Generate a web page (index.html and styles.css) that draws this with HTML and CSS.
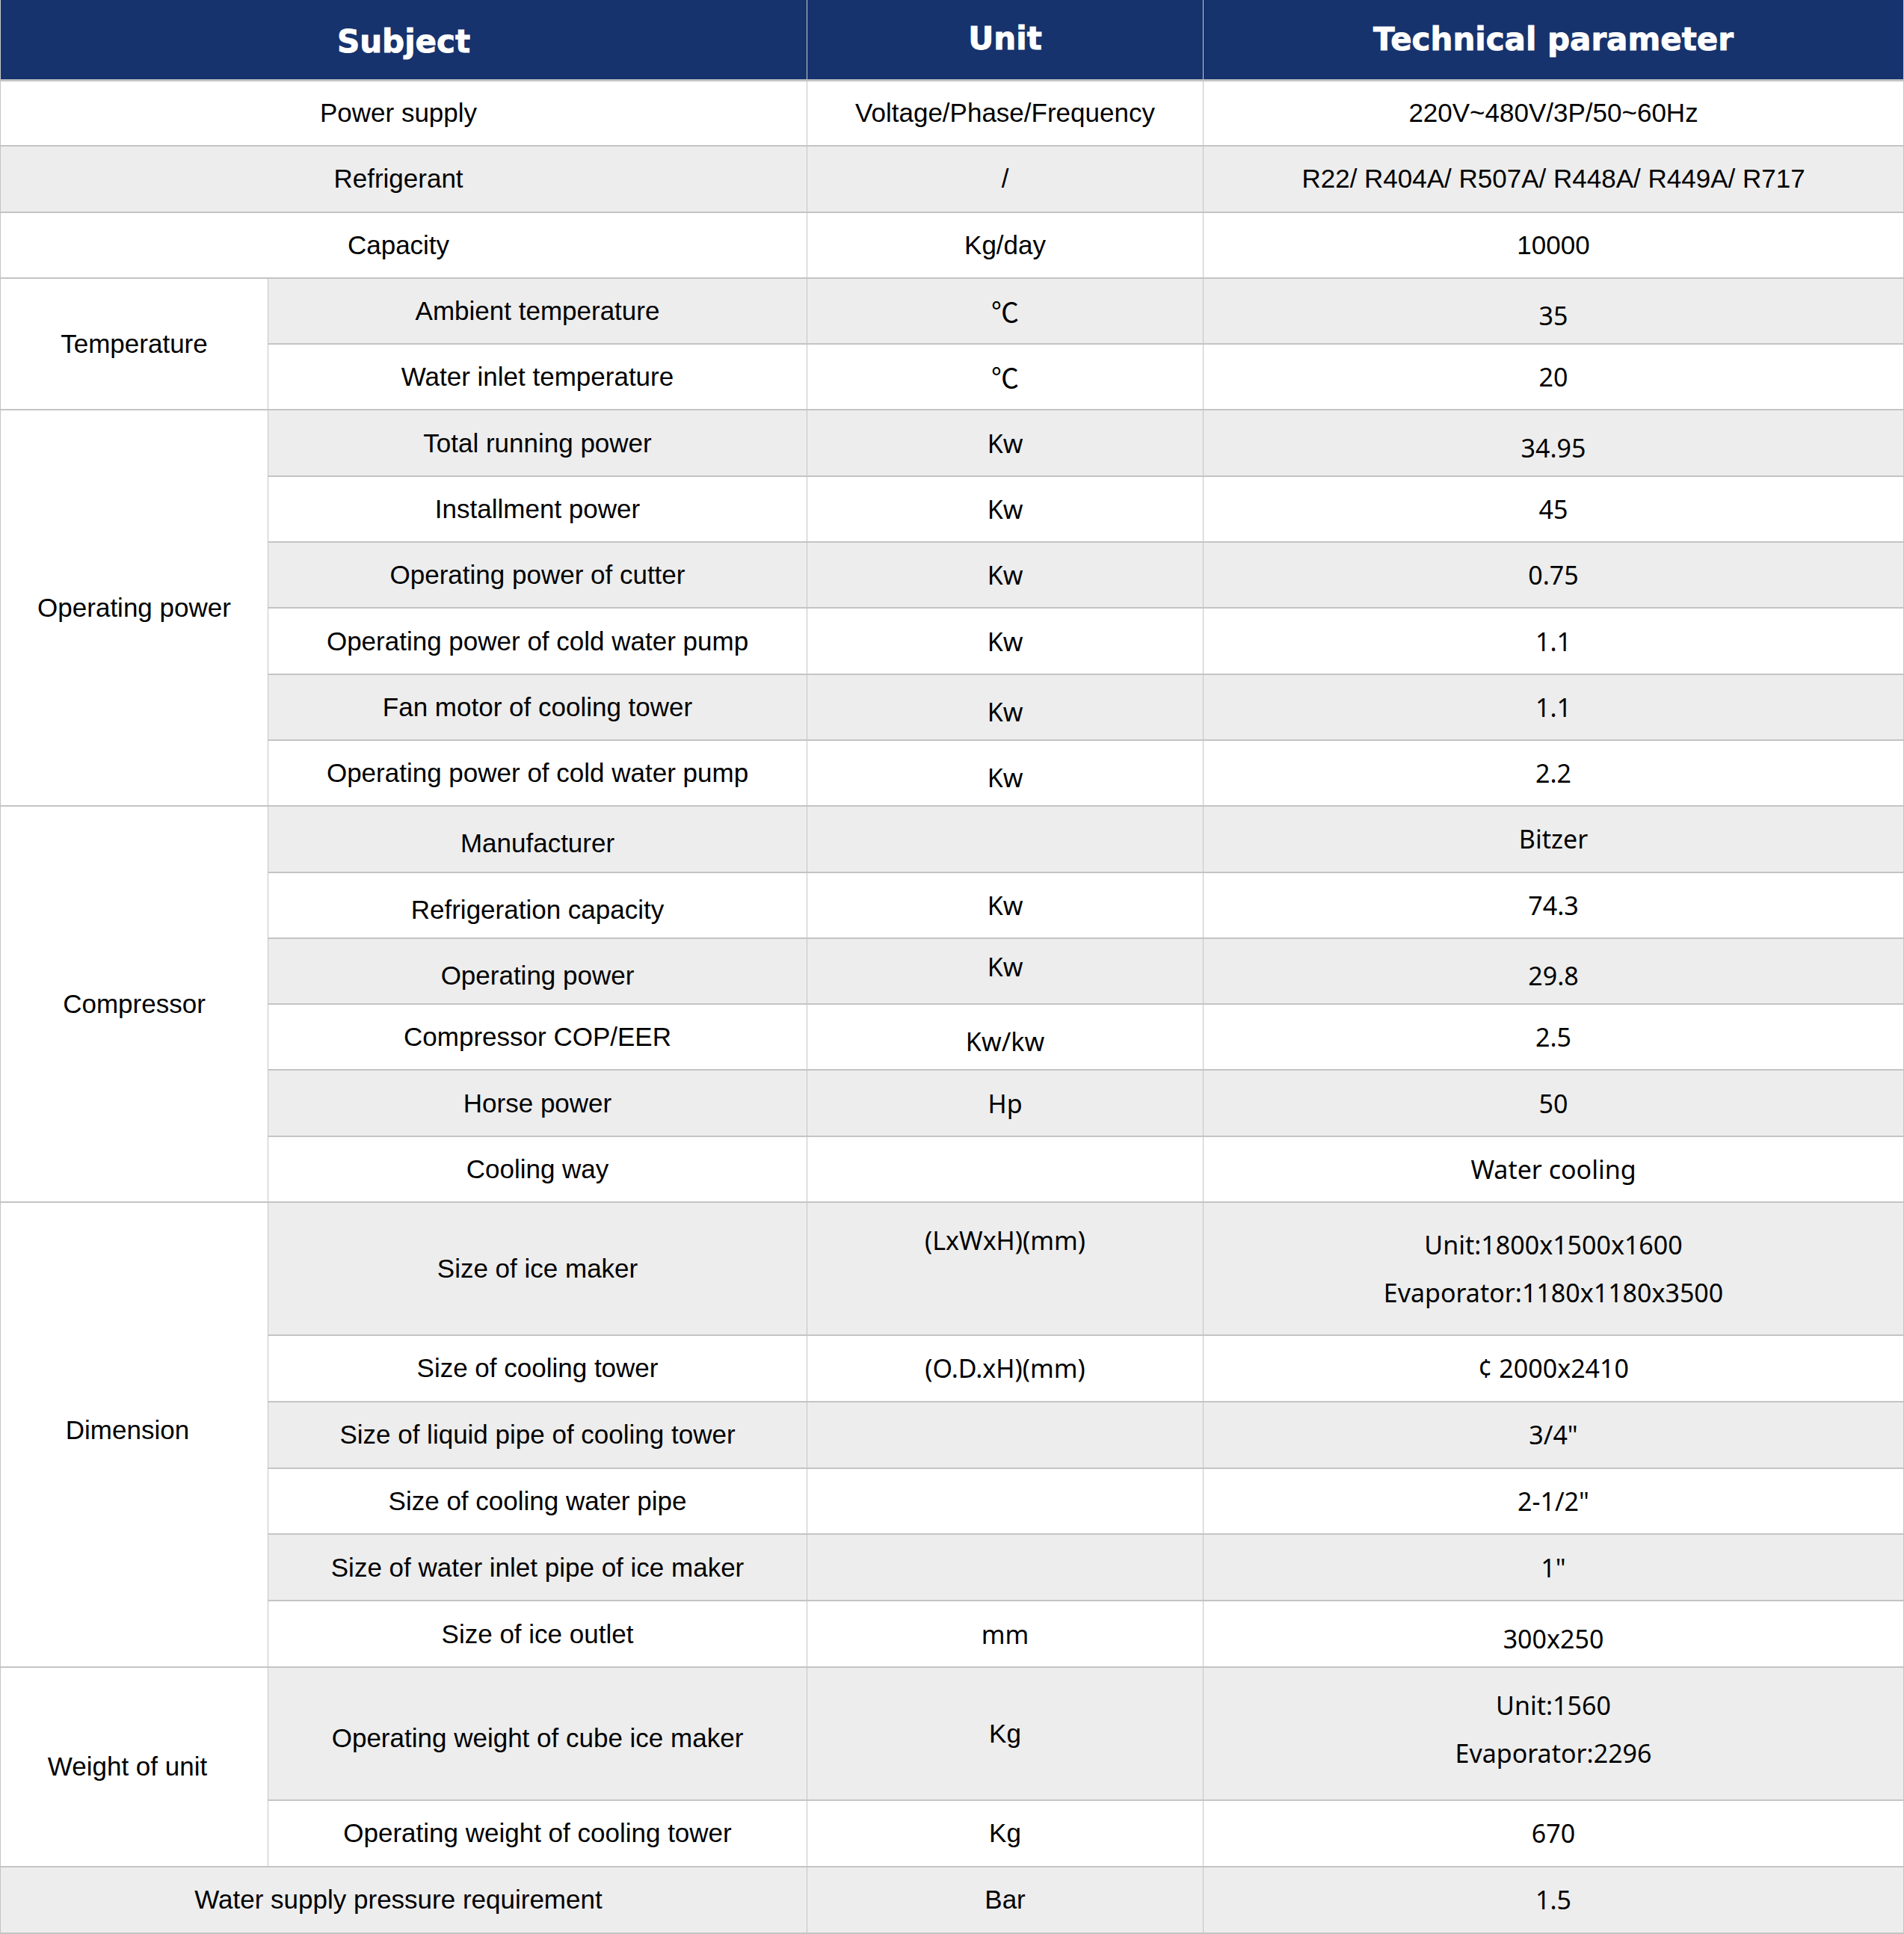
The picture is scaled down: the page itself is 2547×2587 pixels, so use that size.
FILE: index.html
```html
<!DOCTYPE html>
<html lang="en">
<head>
<meta charset="utf-8">
<title>Technical parameters</title>
<link rel="stylesheet" href="styles.css">
</head>
<body>
<table class="spec">
  <colgroup>
    <col class="c-group">
    <col class="c-item">
    <col class="c-unit">
    <col class="c-value">
  </colgroup>
  <thead>
    <tr class="head">
      <th colspan="2" class="lo-s">Subject</th>
      <th class="hi-s">Unit</th>
      <th>Technical parameter</th>
    </tr>
  </thead>
  <tbody>
    <tr>
      <td colspan="2" class="wide">Power supply</td>
      <td>Voltage/Phase/Frequency</td>
      <td>220V~480V/3P/50~60Hz</td>
    </tr>
    <tr class="alt">
      <td colspan="2" class="wide">Refrigerant</td>
      <td>/</td>
      <td>R22/ R404A/ R507A/ R448A/ R449A/ R717</td>
    </tr>
    <tr>
      <td colspan="2" class="wide">Capacity</td>
      <td>Kg/day</td>
      <td>10000</td>
    </tr>

    <tr class="alt">
      <td rowspan="2" class="group">Temperature</td>
      <td>Ambient temperature</td>
      <td class="y deg">℃</td>
      <td class="y lo">35</td>
    </tr>
    <tr>
      <td>Water inlet temperature</td>
      <td class="y deg">℃</td>
      <td class="y">20</td>
    </tr>

    <tr class="alt">
      <td rowspan="6" class="group">Operating power</td>
      <td>Total running power</td>
      <td class="y">Kw</td>
      <td class="y lo">34.95</td>
    </tr>
    <tr>
      <td>Installment power</td>
      <td class="y">Kw</td>
      <td class="y">45</td>
    </tr>
    <tr class="alt">
      <td>Operating power of cutter</td>
      <td class="y">Kw</td>
      <td class="y">0.75</td>
    </tr>
    <tr>
      <td>Operating power of cold water pump</td>
      <td class="y">Kw</td>
      <td class="y">1.1</td>
    </tr>
    <tr class="alt">
      <td>Fan motor of cooling tower</td>
      <td class="y lo">Kw</td>
      <td class="y">1.1</td>
    </tr>
    <tr>
      <td>Operating power of cold water pump</td>
      <td class="y lo">Kw</td>
      <td class="y">2.2</td>
    </tr>

    <tr class="alt">
      <td rowspan="6" class="group">Compressor</td>
      <td class="lo">Manufacturer</td>
      <td class="y"></td>
      <td class="y">Bitzer</td>
    </tr>
    <tr>
      <td class="lo">Refrigeration capacity</td>
      <td class="y">Kw</td>
      <td class="y">74.3</td>
    </tr>
    <tr class="alt">
      <td class="lo">Operating power</td>
      <td class="y hi">Kw</td>
      <td class="y lo">29.8</td>
    </tr>
    <tr>
      <td>Compressor COP/EER</td>
      <td class="y lo">Kw/kw</td>
      <td class="y">2.5</td>
    </tr>
    <tr class="alt">
      <td>Horse power</td>
      <td class="y">Hp</td>
      <td class="y">50</td>
    </tr>
    <tr>
      <td>Cooling way</td>
      <td class="y"></td>
      <td class="y">Water cooling</td>
    </tr>

    <tr class="alt double">
      <td rowspan="6" class="group hi shift">Dimension</td>
      <td>Size of ice maker</td>
      <td class="y two hi">(LxWxH)(mm)<br>&nbsp;</td>
      <td class="y two">Unit:1800x1500x1600<br>Evaporator:1180x1180x3500</td>
    </tr>
    <tr class="tall">
      <td>Size of cooling tower</td>
      <td class="y">(O.D.xH)(mm)</td>
      <td class="y">¢ 2000x2410</td>
    </tr>
    <tr class="alt tall">
      <td>Size of liquid pipe of cooling tower</td>
      <td class="y"></td>
      <td class="y">3/4"</td>
    </tr>
    <tr class="tall">
      <td>Size of cooling water pipe</td>
      <td class="y"></td>
      <td class="y">2-1/2"</td>
    </tr>
    <tr class="alt tall">
      <td>Size of water inlet pipe of ice maker</td>
      <td class="y"></td>
      <td class="y">1"</td>
    </tr>
    <tr class="tall">
      <td>Size of ice outlet</td>
      <td class="y">mm</td>
      <td class="y lo">300x250</td>
    </tr>

    <tr class="alt double">
      <td rowspan="2" class="group shift">Weight of unit</td>
      <td class="lo">Operating weight of cube ice maker</td>
      <td>Kg</td>
      <td class="y two hi">Unit:1560<br>Evaporator:2296</td>
    </tr>
    <tr class="tall">
      <td>Operating weight of cooling tower</td>
      <td>Kg</td>
      <td class="y">670</td>
    </tr>

    <tr class="alt tall">
      <td colspan="2" class="wide">Water supply pressure requirement</td>
      <td>Bar</td>
      <td class="y">1.5</td>
    </tr>
  </tbody>
</table>
</body>
</html>
```

FILE: styles.css
```css
html, body {
  margin: 0;
  padding: 0;
  background: #ffffff;
}

.spec {
  width: 2546px;
  table-layout: fixed;
  border-collapse: collapse;
  font-family: "Liberation Sans", Arial, sans-serif;
  font-size: 35px;
  color: #000000;
}

.c-group { width: 358px; }
.c-item { width: 721px; }
.c-unit { width: 530px; }
.c-value { width: 937px; }

.spec th,
.spec td {
  padding: 0;
  text-align: center;
  vertical-align: middle;
  border-style: solid;
  border-color: #c4c4c4;
  border-width: 2px 1px;
  background: #ffffff;
}

.spec tr { height: 88.3px; }
.spec tr.tall { height: 88.8px; }
.spec tr.double { height: 178px; }
.spec tr.head { height: 107px; }

.spec th {
  background: #17336d;
  color: #ffffff;
  font-family: "DejaVu Sans", "Liberation Sans", sans-serif;
  font-weight: 700;
  font-size: 42px;
  -webkit-text-stroke: 0.9px #ffffff;
  border-top: 0;
  border-color: #c8c8c8;
  border-bottom: 3px solid #c4c4c4;
}

.spec tr.alt td { background: #ededed; }
.spec tr.alt td.group,
.spec td.group { background: #ffffff; }

.spec td.wide { padding-right: 14px; }
.spec td.shift { padding-right: 18px; }

.spec td.y {
  font-family: "Noto Sans", "Open Sans", "Noto Sans CJK SC", sans-serif;
  font-size: 34px;
}

.spec td.deg {
  font-family: "Noto Sans CJK SC", "Noto Sans", sans-serif;
  font-size: 37px;
}

.spec td.two { line-height: 64px; }

.spec .lo { padding-top: 12px; }
.spec .hi { padding-bottom: 12px; }
.spec .lo-s { padding-top: 5px; }
.spec .hi-s { padding-bottom: 3px; }
```
